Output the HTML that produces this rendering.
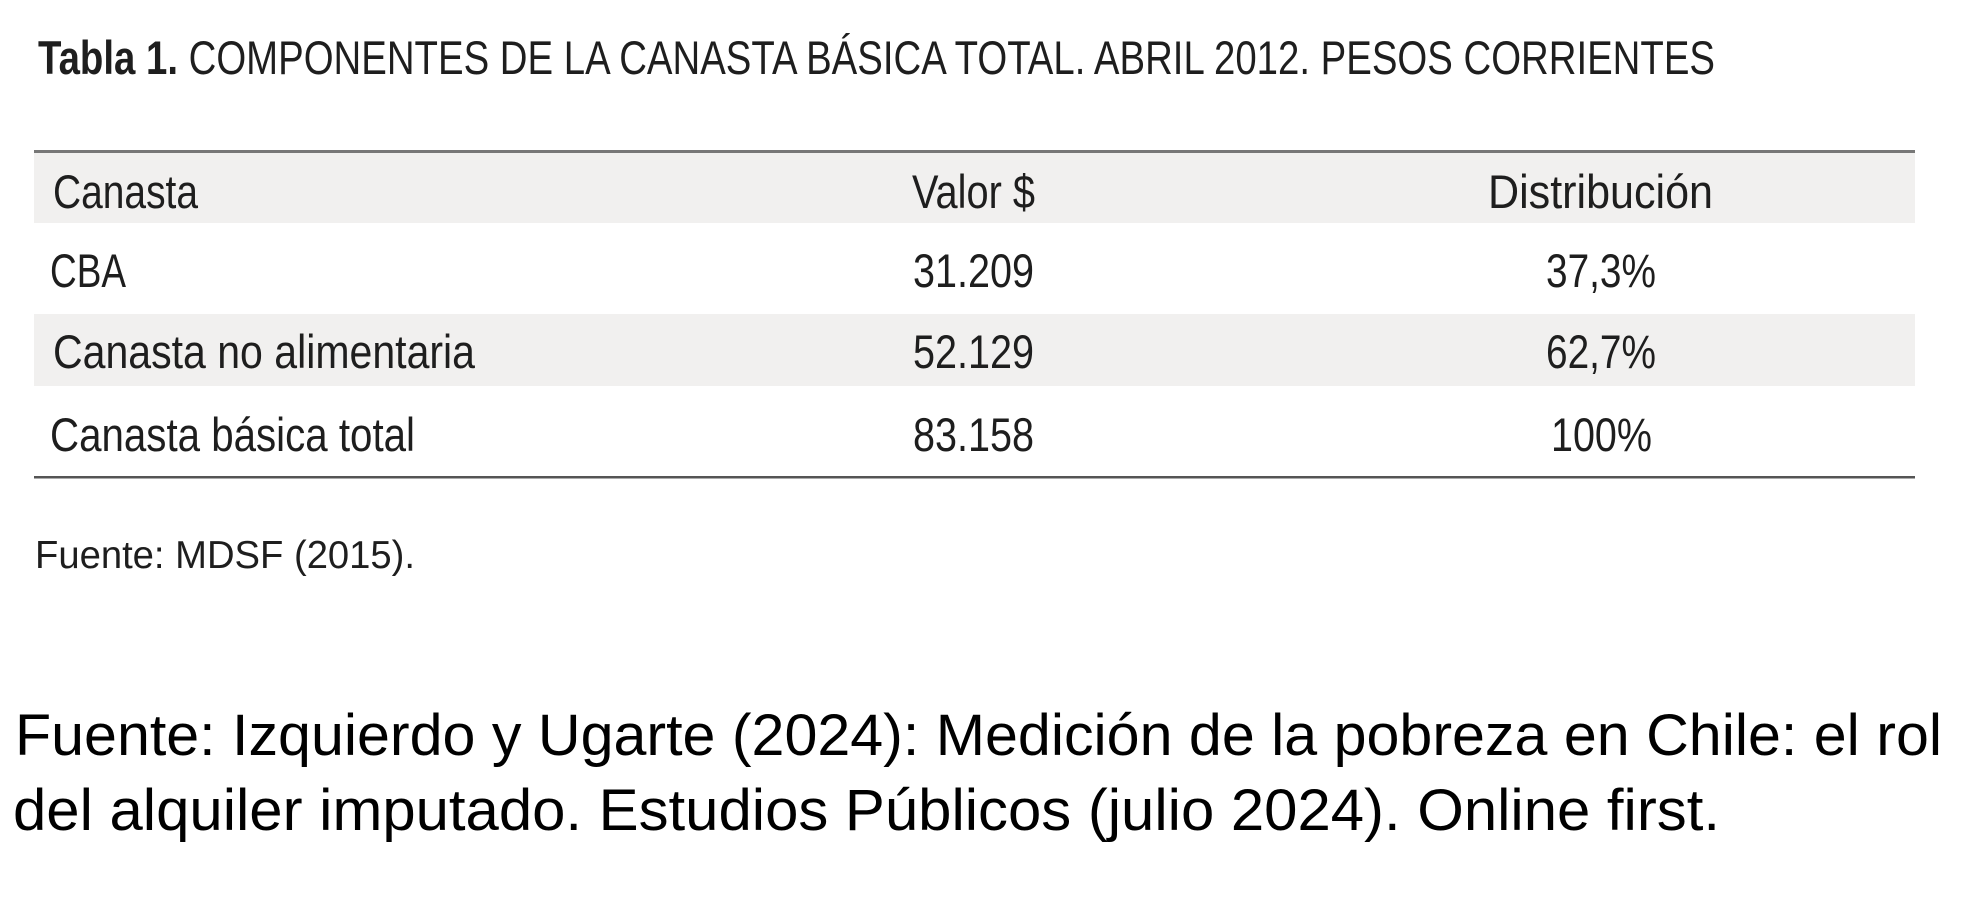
<!DOCTYPE html>
<html><head><meta charset="utf-8"><style>
html,body{margin:0;padding:0;background:#fff;width:1978px;height:910px;overflow:hidden}
svg{display:block}
.t{font-family:"Liberation Sans",sans-serif;fill:#1e1e1e}
</style></head><body>
<svg width="1978" height="910" viewBox="0 0 1978 910" xmlns="http://www.w3.org/2000/svg">
<rect width="1978" height="910" fill="#fff"/>
<text class="t" x="38" y="74" font-size="47" lengthAdjust="spacingAndGlyphs" textLength="1677"><tspan font-weight="bold">Tabla 1.</tspan> COMPONENTES DE LA CANASTA BÁSICA TOTAL. ABRIL 2012. PESOS CORRIENTES</text>
<rect x="34" y="152" width="1881" height="71" fill="#f1f0ef"/>
<rect x="34" y="314" width="1881" height="72" fill="#f1f0ef"/>
<rect x="34" y="150" width="1881" height="3" fill="#777"/>
<rect x="34" y="476" width="1881" height="2.5" fill="#555"/>
<g class="t" font-size="47">
<text x="53" y="208" lengthAdjust="spacingAndGlyphs" textLength="145">Canasta</text>
<text x="912" y="208" lengthAdjust="spacingAndGlyphs" textLength="123">Valor $</text>
<text x="1488" y="208" lengthAdjust="spacingAndGlyphs" textLength="225">Distribución</text>
<text x="50" y="287" lengthAdjust="spacingAndGlyphs" textLength="76">CBA</text>
<text x="913" y="287" lengthAdjust="spacingAndGlyphs" textLength="121">31.209</text>
<text x="1546" y="287" lengthAdjust="spacingAndGlyphs" textLength="110">37,3%</text>
<text x="53" y="368" lengthAdjust="spacingAndGlyphs" textLength="422">Canasta no alimentaria</text>
<text x="913" y="368" lengthAdjust="spacingAndGlyphs" textLength="121">52.129</text>
<text x="1546" y="368" lengthAdjust="spacingAndGlyphs" textLength="110">62,7%</text>
<text x="50" y="451" lengthAdjust="spacingAndGlyphs" textLength="365">Canasta básica total</text>
<text x="913" y="451" lengthAdjust="spacingAndGlyphs" textLength="121">83.158</text>
<text x="1551" y="451" lengthAdjust="spacingAndGlyphs" textLength="101">100%</text>
</g>
<text class="t" x="35" y="568" font-size="39" lengthAdjust="spacingAndGlyphs" textLength="380">Fuente: MDSF (2015).</text>
<g font-family="'Liberation Sans',sans-serif" fill="#000" font-size="58">
<text x="15" y="755" lengthAdjust="spacingAndGlyphs" textLength="1927">Fuente:  Izquierdo y Ugarte (2024):  Medición de la pobreza en Chile:  el rol</text>
<text x="13" y="830" lengthAdjust="spacingAndGlyphs" textLength="1707">del alquiler imputado.  Estudios Públicos (julio 2024).  Online first.</text>
</g>
</svg>
</body></html>
